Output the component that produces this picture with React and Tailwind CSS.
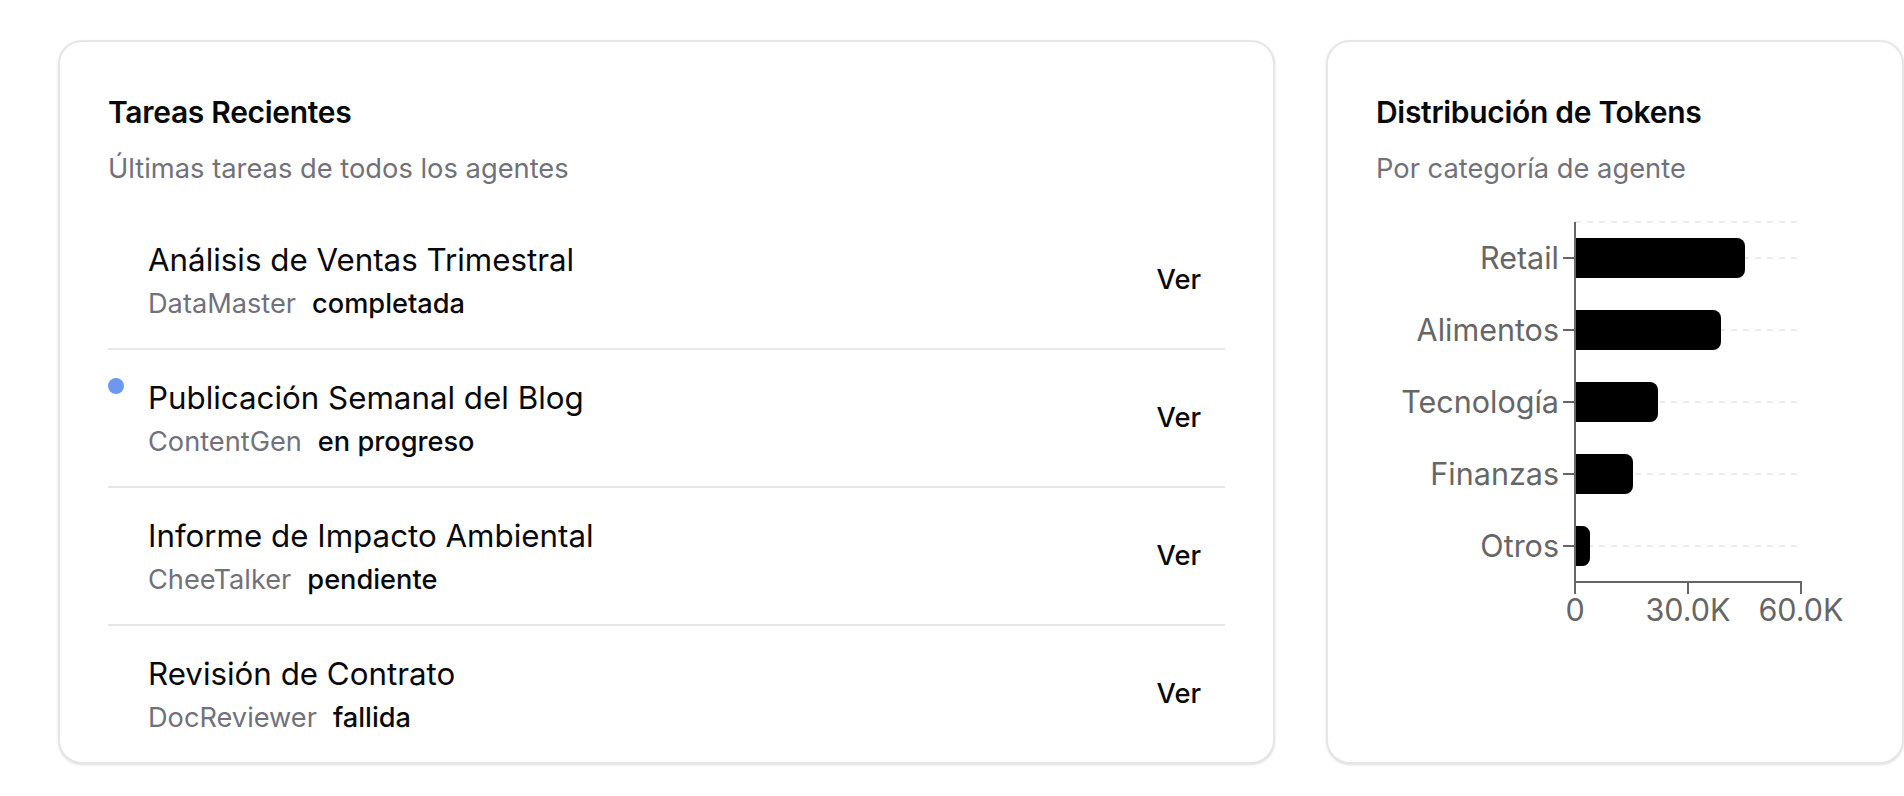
import React from "react";

const tasks = [
  { title: "Análisis de Ventas Trimestral", agent: "DataMaster", status: "completada", dot: false },
  { title: "Publicación Semanal del Blog", agent: "ContentGen", status: "en progreso", dot: true },
  { title: "Informe de Impacto Ambiental", agent: "CheeTalker", status: "pendiente", dot: false },
  { title: "Revisión de Contrato", agent: "DocReviewer", status: "fallida", dot: false },
];

const data = [
  ["Retail", 170],
  ["Alimentos", 146],
  ["Tecnología", 83],
  ["Finanzas", 58],
  ["Otros", 15],
];

function barPath(x, y, w, h, r) {
  const rr = Math.min(r, w / 2);
  return `M${x} ${y} H${x + w - rr} A${rr} ${rr} 0 0 1 ${x + w} ${y + rr} V${y + h - rr} A${rr} ${rr} 0 0 1 ${x + w - rr} ${y + h} H${x} Z`;
}

function Chart() {
  const ax = 199;
  const top = 10;
  const bottom = 370;
  const right = 425;
  const centers = data.map((_, i) => top + 36 + i * 72);
  return (
    <svg width="477" height="420" className="block mt-[23px]" fontFamily="Inter, sans-serif">
      <line x1={ax} x2={right} y1={top} y2={top} stroke="#ebebeb" strokeWidth="2" strokeDasharray="6 6" />
      {centers.map((c, i) => (
        <line key={"g" + i} x1={ax} x2={right} y1={c} y2={c} stroke="#ebebeb" strokeWidth="2" strokeDasharray="6 6" />
      ))}
      {data.map(([name, w], i) => (
        <path key={"b" + name} d={barPath(ax, centers[i] - 20, w, 40, 8)} fill="#000" />
      ))}
      <line x1={ax} x2={ax} y1={top} y2={bottom} stroke="#666" strokeWidth="2" />
      {data.map(([name], i) => (
        <g key={"t" + name}>
          <line x1={ax - 12} x2={ax} y1={centers[i]} y2={centers[i]} stroke="#666" strokeWidth="2" />
          <text x={ax - 16} y={centers[i]} dy="0.355em" textAnchor="end" fontSize="30.5" fill="#666">
            {name}
          </text>
        </g>
      ))}
      <line x1={ax - 1} x2={right + 1} y1={bottom} y2={bottom} stroke="#666" strokeWidth="2" />
      {[
        [ax, "0"],
        [312, "30.0K"],
        [right, "60.0K"],
      ].map(([x, l]) => (
        <g key={"x" + l}>
          <line x1={x} x2={x} y1={bottom} y2={bottom + 12} stroke="#666" strokeWidth="2" />
          <text x={x} y={398} dy="0.355em" textAnchor="middle" fontSize="30.5" fill="#666">
            {l}
          </text>
        </g>
      ))}
    </svg>
  );
}

function CardHeader({ title, desc }) {
  return (
    <div>
      <h3 className="text-[30px] leading-[44px] font-semibold tracking-[-0.01em] text-[#09090b]">{title}</h3>
      <p className="mt-[15px] text-[27.3px] leading-[40px] text-[#71717a]">{desc}</p>
    </div>
  );
}

export default function App() {
  return (
    <div className="min-h-screen w-full overflow-hidden bg-white font-['Inter','Noto_Sans',sans-serif] text-[#09090b]">
      <div className="flex items-stretch gap-[51px] pl-[58px] pt-[40px]">
        <div className="w-[1217px] shrink-0 rounded-[24px] border-2 border-[#e6e6e6] bg-white px-[48px] pt-[48px] shadow-sm">
          <CardHeader title="Tareas Recientes" desc="Últimas tareas de todos los agentes" />
          <div className="mt-[23px]">
            {tasks.map((t, i) => (
              <div
                key={t.title}
                className={
                  "flex items-start py-[24px] " + (i < tasks.length - 1 ? "border-b-2 border-[#e6e6e6]" : "")
                }
              >
                <div
                  className={
                    "mt-[4px] h-[16px] w-[16px] shrink-0 rounded-full " + (t.dot ? "bg-[#6e97f0]" : "bg-transparent")
                  }
                />
                <div className="ml-[24px] flex-1">
                  <p className="text-[31.3px] leading-[48px] text-[#09090b]">{t.title}</p>
                  <div className="flex items-center gap-[16px] text-[27.2px] leading-[40px]">
                    <span className="text-[#71717a]">{t.agent}</span>
                    <span className="font-[450] text-[#09090b]">{t.status}</span>
                  </div>
                </div>
                <button className="self-center h-[72px] rounded-[12px] px-[24px] text-[27.3px] font-[450] text-[#09090b]">
                  Ver
                </button>
              </div>
            ))}
          </div>
        </div>
        <div className="w-[578px] shrink-0 rounded-[24px] border-2 border-[#e6e6e6] bg-white px-[48px] pt-[48px] shadow-sm">
          <CardHeader title="Distribución de Tokens" desc="Por categoría de agente" />
          <Chart />
        </div>
      </div>
    </div>
  );
}
